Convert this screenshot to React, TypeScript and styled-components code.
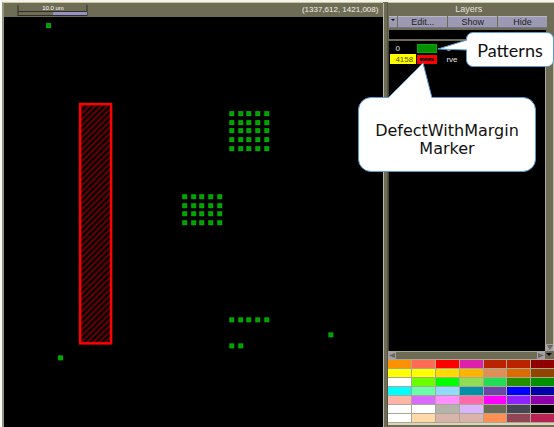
import React from "react";
import styled, { createGlobalStyle } from "styled-components";

const olive = "#6f6c55";
const lilac = "#9c99b3";
const edge = "#a9a78f";

const GlobalStyle = createGlobalStyle`
  * { box-sizing: border-box; }
  body { margin: 0; background: #fff; }
  button { border: 0; padding: 0; margin: 0; font: inherit; }
`;

const Page = styled.main`
  position: relative;
  display: flex;
  min-height: 100vh;
  border-top: 2px solid #f4f4ea;
  border-left: 2px solid #fbfbf6;
  background: ${olive};
  font-family: "Liberation Sans", Arial, sans-serif;
  font-size: 8px;
  color: #fff;
`;

const Viewer = styled.section`
  flex: 1;
  min-width: 0;
  display: flex;
  flex-direction: column;
  border-left: 2px solid #94957f;
  border-top: 1px solid #c8c9a0;
  background: #000;
`;

const StatusBar = styled.header`
  display: flex;
  justify-content: space-between;
  height: 14px;
  padding: 0 5px 0 13px;
  background: ${olive};
`;

const Coordinates = styled.output`
  font-size: 8px;
  line-height: 14px;
  color: #f1f1e8;
`;

const LayoutDrawing = styled.svg`
  display: block;
  width: 100%;
  flex: 1;
  min-height: 0;
`;

const Divider = styled.div`
  width: 5px;
  margin-top: 1px;
  background: ${olive};
  border-left: 1px solid #b9b8a8;
  border-right: 1px solid #56543f;
`;

const Panel = styled.aside`
  display: flex;
  flex-direction: column;
  width: 30%;
  border-top: 1px solid #c8c9a0;
`;

const Title = styled.h1`
  margin: 0;
  padding-right: 5px;
  font-size: 9px;
  font-weight: 400;
  line-height: 13px;
  text-align: center;
  color: #e6e5dc;
`;

const Toolbar = styled.div`
  display: grid;
  grid-template-columns: 8px 1fr 1fr 1fr;
  gap: 1px;
  height: 12px;
  margin: 0 7px 2px 1px;
`;

const ToolButton = styled.button`
  display: flex;
  align-items: center;
  justify-content: center;
  background: ${lilac};
  border-top: 1px solid #b9b7ca;
  border-bottom: 1px solid #77748a;
  color: #222;
  font-size: 9px;
  line-height: 10px;
`;

const FilterField = styled.input`
  width: auto;
  height: 9px;
  margin: 0 8px 2px 1px;
  padding: 0 4px;
  border: 0;
  outline: 0;
  background: #000;
  color: #fff;
  font: inherit;
`;

const ListArea = styled.div`
  flex: 1;
  display: grid;
  grid-template-columns: 1fr 9px;
  grid-template-rows: 1fr 8px;
`;

const LayerTable = styled.table`
  width: 100%;
  border-collapse: separate;
  border-spacing: 1px;
  table-layout: fixed;
  line-height: 9px;
`;

const ListBody = styled.div`
  background: #000;
  border-left: 1px solid #45432f;
  padding-top: 1px;
`;

const NumberCell = styled.td<{ $selected?: boolean }>`
  width: 26px;
  height: 10px;
  padding: 0 0 0 5px;
  background: ${(p) => (p.$selected ? "#ffff00" : "transparent")};
  color: ${(p) => (p.$selected ? "#554f00" : "#e8e8e8")};
`;

const SwatchCell = styled.td`
  width: 20px;
  padding: 0;
  svg { display: block; width: 100%; height: 9px; }
`;

const NameCell = styled.td`
  padding: 0 0 0 8px;
  color: #e8e8e8;
`;

const VerticalTrack = styled.div`
  display: flex;
  align-items: flex-end;
  background: ${olive};
  border-left: 1px solid ${edge};
  border-right: 1px solid #bdbba4;
`;

const HorizontalTrack = styled.div`
  display: flex;
  justify-content: space-between;
  background: ${olive};
  border-top: 1px solid ${edge};
`;

const ArrowButton = styled.button<{ $plain?: boolean }>`
  display: flex;
  width: 8px;
  height: 7px;
  align-items: center;
  justify-content: center;
  background: ${(p) => (p.$plain ? olive : "#a3a0ac")};
  color: ${(p) => (p.$plain ? "#000" : "#6b6956")};
  svg { width: 6px; height: 5px; fill: currentColor; }
`;

const Palette = styled.div`
  display: grid;
  grid-template-columns: repeat(7, 1fr);
  grid-auto-rows: 8px;
  gap: 1px;
  padding: 1px 0 1px 0;
  margin-bottom: 2px;
  background: #aaa797;
  border-bottom: 2px solid #d9d5b6;
`;

const ColourButton = styled.button<{ $colour: string }>`
  background: ${(p) => p.$colour};
`;

const Callout = styled.div`
  position: absolute;
  display: flex;
  align-items: center;
  justify-content: center;
  background: #fff;
  border: 1px solid #5b9bd5;
  color: #111;
  text-align: center;
`;

const PatternsCallout = styled(Callout)`
  top: 30px;
  right: 0;
  width: 88px;
  height: 35px;
  border-radius: 7px;
  font: 18px/24px Lato, sans-serif;
`;

const MarkerCallout = styled(Callout)`
  top: 95px;
  right: 18px;
  width: 178px;
  height: 75px;
  padding-top: 10px;
  border-radius: 13px;
  font: 16px/18px "DejaVu Sans", Verdana, sans-serif;
`;

const PatternsTail = styled.svg`
  position: absolute;
  top: 6px;
  left: -30px;
  width: 32px;
  height: 14px;
`;

const MarkerTail = styled.svg`
  position: absolute;
  top: -37px;
  left: 28px;
  width: 48px;
  height: 39px;
`;

const palette = [
  "#ff9000", "#ff6b55", "#ff0000", "#dc22aa", "#bb2200", "#bb2200", "#900000",
  "#ffff00", "#ffff00", "#ffd900", "#ffb400", "#dc9055", "#dc6b00", "#904600",
  "#ffffff", "#6bff00", "#00ff00", "#90dc55", "#22dc55", "#229000", "#009000",
  "#00ffff", "#6bffaa", "#90d9ff", "#0090aa", "#6b46aa", "#0000ff", "#0000aa",
  "#ffb4aa", "#d96bff", "#ff90ff", "#ff6baa", "#ff00ff", "#9022ff", "#9000aa",
  "#ffffff", "#ffffff", "#b4b4aa", "#d9b4ff", "#6b6b55", "#464655", "#000000",
  "#ffffff", "#ffd9aa", "#d9b4aa", "#d9b4aa", "#ff9055", "#904655", "#bb2255",
];

const grid = (x: number, y: number, columns: number, rows: number) =>
  Array.from({ length: columns * rows }, (_, i) => [
    x + Math.round((i % columns) * 8.7),
    y + Math.round(Math.floor(i / columns) * 8.7),
  ]);

const contacts = [
  ...grid(225, 94, 5, 5),
  ...grid(178, 177, 5, 4),
  ...grid(225, 300, 5, 1),
  ...grid(225, 326, 2, 1),
  [42, 6],
  [324, 315],
  [54, 338],
];

const ScaleBar = () => (
  <svg width="72" height="14" role="img" aria-label="Scale 10.0 um">
    <path d="M1 2V13M70 2V13M1 8.500H70M1 12.500H70" stroke="#302f25" fill="none" />
    <rect x="36" y="9" width="34" height="3" fill="#9693c4" />
    <text x="36" y="7" textAnchor="middle" fontSize="6" fill="#fff">10.0 um</text>
  </svg>
);

const Arrow = ({ points }: { points: string }) => (
  <svg viewBox="0 0 6 5" aria-hidden="true"><polygon points={points} /></svg>
);

export default function App() {
  return (
    <>
      <GlobalStyle />
      <Page>
        <Viewer>
          <StatusBar>
            <ScaleBar />
            <Coordinates>(1337,612, 1421,008)</Coordinates>
          </StatusBar>
          <LayoutDrawing viewBox="0 0 379 410" preserveAspectRatio="xMinYMin meet" role="img" aria-label="Mask layout">
            <defs>
              <pattern id="hatch" width="6" height="6" patternUnits="userSpaceOnUse">
                <path d="M-1 7L7 -1M-1 1L1 -1M5 7L7 5" stroke="#6a0000" strokeWidth="2" />
              </pattern>
            </defs>
            <rect x="76" y="87" width="31" height="239" fill="url(#hatch)" stroke="#ff0000" strokeWidth="2.500" />
            {contacts.map(([x, y], i) => (
              <g key={i}>
                <rect x={x} y={y} width="5" height="5" fill="#00a800" />
                <rect x={x + 2} y={y + 2} width="1" height="1" fill="#007000" />
              </g>
            ))}
          </LayoutDrawing>
        </Viewer>
        <Divider />
        <Panel>
          <Title>Layers</Title>
          <Toolbar>
            <ToolButton aria-label="Menu">
              <svg width="4" height="8" aria-hidden="true"><path d="M0 1H4L2 3Z" fill="#111" /></svg>
            </ToolButton>
            <ToolButton>Edit...</ToolButton>
            <ToolButton>Show</ToolButton>
            <ToolButton>Hide</ToolButton>
          </Toolbar>
          <FilterField aria-label="Filter layers" />
          <ListArea>
            <ListBody>
              <LayerTable aria-label="Layers">
                <tbody>
                  <tr>
                    <NumberCell>0</NumberCell>
                    <SwatchCell>
                      <svg viewBox="0 0 20 9" preserveAspectRatio="none" aria-hidden="true">
                        <rect x="0.500" y="0.500" width="19" height="8" fill="#009000" stroke="#00b000" />
                      </svg>
                    </SwatchCell>
                    <NameCell>0</NameCell>
                  </tr>
                  <tr>
                    <NumberCell $selected>4158</NumberCell>
                    <SwatchCell>
                      <svg viewBox="0 0 20 9" preserveAspectRatio="none" aria-hidden="true">
                        <rect width="20" height="9" fill="#ff0000" />
                        <rect x="3" y="3" width="14" height="3" fill="#300000" />
                        <path d="M5 6L8 3M9 6L12 3M13 6L16 3" stroke="#b00000" />
                      </svg>
                    </SwatchCell>
                    <NameCell>rve</NameCell>
                  </tr>
                </tbody>
              </LayerTable>
            </ListBody>
            <VerticalTrack>
              <ArrowButton aria-label="Scroll down"><Arrow points="0,0 6,0 3,5" /></ArrowButton>
            </VerticalTrack>
            <HorizontalTrack>
              <ArrowButton aria-label="Scroll left"><Arrow points="6,0 6,5 0,2.500" /></ArrowButton>
              <ArrowButton aria-label="Scroll right"><Arrow points="0,0 0,5 6,2.500" /></ArrowButton>
            </HorizontalTrack>
            <ArrowButton $plain aria-label="More"><Arrow points="0,1 6,1 3,4" /></ArrowButton>
          </ListArea>
          <Palette>
            {palette.map((colour, i) => (
              <ColourButton key={i} $colour={colour} aria-label={`Colour ${i + 1}`} />
            ))}
          </Palette>
        </Panel>
        <PatternsCallout>
          Patterns
          <PatternsTail viewBox="0 0 32 14" aria-hidden="true">
            <path d="M30 1L1 10L30 11" fill="#fff" stroke="#5b9bd5" />
            <path d="M29 2H32V10H29Z" fill="#fff" />
          </PatternsTail>
        </PatternsCallout>
        <MarkerCallout>
          <span>DefectWithMargin<br />Marker</span>
          <MarkerTail viewBox="0 0 48 39" aria-hidden="true">
            <path d="M1 37L36 2L45 37" fill="#fff" stroke="#5b9bd5" />
            <path d="M2 37H44V39H2Z" fill="#fff" />
          </MarkerTail>
        </MarkerCallout>
      </Page>
    </>
  );
}
